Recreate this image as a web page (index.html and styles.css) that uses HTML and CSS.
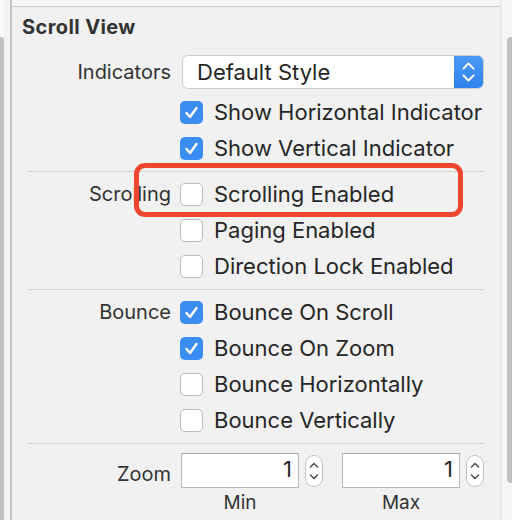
FILE: index.html
```html
<!DOCTYPE html>
<html lang="en">
<head>
    <meta charset="UTF-8">
    <meta name="viewport" content="width=device-width, initial-scale=1.0">
    <title>Scroll View Inspector</title>
    <link rel="stylesheet" href="styles.css">
</head>
<body>
    <div class="gutter gutter-left">
        <div class="thumb"></div>
    </div>

    <div class="panel">
        <h2 class="title">Scroll View</h2>

        <div class="section section-first">
            <div class="row row-popup">
                <span class="label">Indicators</span>
                <div class="popup">
                    <span class="popup-text">Default Style</span>
                    <span class="popup-arrows">
                        <svg width="29" height="34" viewBox="0 0 29 34">
                            <polyline points="9.5,13.5 14.5,8.5 19.5,13.5" fill="none" stroke="#fff" stroke-width="2" stroke-linecap="round" stroke-linejoin="round"/>
                            <polyline points="9.5,20.5 14.5,25.5 19.5,20.5" fill="none" stroke="#fff" stroke-width="2" stroke-linecap="round" stroke-linejoin="round"/>
                        </svg>
                    </span>
                </div>
            </div>
            <div class="row">
                <span class="label"></span>
                <label class="check"><span class="box on"></span>Show Horizontal Indicator</label>
            </div>
            <div class="row">
                <span class="label"></span>
                <label class="check"><span class="box on"></span>Show Vertical Indicator</label>
            </div>
        </div>

        <div class="section">
            <div class="row">
                <span class="label">Scrolling</span>
                <label class="check"><span class="box"></span>Scrolling Enabled</label>
            </div>
            <div class="row">
                <span class="label"></span>
                <label class="check"><span class="box"></span>Paging Enabled</label>
            </div>
            <div class="row">
                <span class="label"></span>
                <label class="check"><span class="box"></span>Direction Lock Enabled</label>
            </div>
        </div>

        <div class="section">
            <div class="row">
                <span class="label">Bounce</span>
                <label class="check"><span class="box on"></span>Bounce On Scroll</label>
            </div>
            <div class="row">
                <span class="label"></span>
                <label class="check"><span class="box on"></span>Bounce On Zoom</label>
            </div>
            <div class="row">
                <span class="label"></span>
                <label class="check"><span class="box"></span>Bounce Horizontally</label>
            </div>
            <div class="row">
                <span class="label"></span>
                <label class="check"><span class="box"></span>Bounce Vertically</label>
            </div>
        </div>

        <div class="section section-zoom">
            <div class="row row-zoom">
                <span class="label">Zoom</span>
                <div class="zoom-fields">
                    <div class="field-group">
                        <div class="field-line">
                            <div class="field">1</div>
                            <div class="stepper">
                                <svg width="18" height="32" viewBox="0 0 18 32">
                                    <polyline points="5,11.5 9,7.5 13,11.5" fill="none" stroke="#4a4a4a" stroke-width="1.6" stroke-linecap="round" stroke-linejoin="round"/>
                                    <polyline points="5,20.5 9,24.5 13,20.5" fill="none" stroke="#4a4a4a" stroke-width="1.6" stroke-linecap="round" stroke-linejoin="round"/>
                                </svg>
                            </div>
                        </div>
                        <span class="caption">Min</span>
                    </div>
                    <div class="field-group">
                        <div class="field-line">
                            <div class="field">1</div>
                            <div class="stepper">
                                <svg width="18" height="32" viewBox="0 0 18 32">
                                    <polyline points="5,11.5 9,7.5 13,11.5" fill="none" stroke="#4a4a4a" stroke-width="1.6" stroke-linecap="round" stroke-linejoin="round"/>
                                    <polyline points="5,20.5 9,24.5 13,20.5" fill="none" stroke="#4a4a4a" stroke-width="1.6" stroke-linecap="round" stroke-linejoin="round"/>
                                </svg>
                            </div>
                        </div>
                        <span class="caption">Max</span>
                    </div>
                </div>
            </div>
        </div>
    </div>

    <div class="gutter gutter-right">
        <div class="thumb"></div>
    </div>

    <!-- red annotation over the Scrolling row -->
    <div class="highlight"></div>
</body>
</html>
```

FILE: styles.css
```css
* {
    margin: 0;
    padding: 0;
    box-sizing: border-box;
}

body {
    font-family: 'Inter', 'Roboto', sans-serif;
    color: #262626;
    background: #f6f6f6;
    width: 512px;
    height: 520px;
    overflow: hidden;
    display: flex;
    position: relative;
}

.gutter {
    display: flex;
    padding-top: 37px;
}

.gutter-left {
    width: 12px;
    border-right: 2px solid #c4c4c4;
    background: linear-gradient(90deg, #fafafa 0, #fafafa 4px, #f3f3f3 4px);
}

.gutter-left .thumb {
    width: 4px;
    height: 100%;
    background: #c1c1c1;
    border-top-right-radius: 3px;
}

.gutter-right {
    width: 12px;
    border-left: 2px solid #ebebeb;
    justify-content: flex-end;
}

.gutter-right .thumb {
    width: 5px;
    height: 446px;
    background: #c1c1c1;
    border-top-left-radius: 4px;
    border-bottom-left-radius: 4px;
}

.panel {
    flex: 1;
    margin-top: 6px;
    border-top: 1px solid #cfcfcf;
    background: #f1f1f1;
}

.title {
    font-size: 20px;
    font-weight: 700;
    color: #333;
    padding: 8px 0 0 10px;
    height: 46px;
    letter-spacing: 0.4px;
}

.section {
    margin: 0 16px;
    padding: 4px 0 5px;
    border-bottom: 1px solid #d2d2d2;
}

.section-first {
    padding-top: 1px;
}

.section-zoom {
    border-bottom: none;
    padding-top: 9px;
}

.row {
    display: grid;
    grid-template-columns: 143px 1fr;
    column-gap: 9px;
    align-items: center;
    height: 36px;
    font-size: 22px;
}

.row-popup {
    height: 36px;
    margin-bottom: 4px;
}

.label {
    text-align: right;
    color: #333;
    font-size: 20px;
}

.check {
    display: flex;
    align-items: center;
    gap: 11px;
}

.box {
    width: 23px;
    height: 23px;
    border-radius: 5px;
    background: #fff;
    border: 1px solid #bcbcbc;
    flex-shrink: 0;
}

.box.on {
    border: none;
    background: #3a8ef3 url("data:image/svg+xml,%3Csvg xmlns='http://www.w3.org/2000/svg' width='23' height='23' viewBox='0 0 23 23'%3E%3Cpolyline points='6.5,12 10,16 16.5,7' fill='none' stroke='white' stroke-width='2.4' stroke-linecap='round' stroke-linejoin='round'/%3E%3C/svg%3E") no-repeat center;
}

.popup {
    margin-left: 2px;
    height: 34px;
    display: flex;
    align-items: center;
    background: #fff;
    border: 1px solid #cdcdcd;
    border-radius: 6px;
    overflow: hidden;
}

.popup-text {
    flex: 1;
    padding-left: 14px;
}

.popup-arrows {
    width: 29px;
    height: 34px;
    background: linear-gradient(#4a9bf7, #2f82ee);
    display: flex;
}

.row-zoom {
    height: auto;
    align-items: start;
}

.row-zoom .label {
    padding-top: 9px;
}

.zoom-fields {
    display: flex;
    gap: 19px;
    margin-left: 1px;
}

.field-group {
    display: flex;
    flex-direction: column;
}

.field-line {
    display: flex;
    align-items: center;
    gap: 6px;
}

.field {
    width: 118px;
    height: 35px;
    background: #fff;
    border: 1px solid #b9b9b9;
    border-top-color: #a9a9a9;
    text-align: right;
    padding: 2px 6px 0 0;
}

.stepper {
    width: 18px;
    height: 32px;
    background: #fff;
    border: 1px solid #c2c2c2;
    border-radius: 9px;
    display: flex;
    justify-content: center;
    align-items: center;
}

.caption {
    width: 118px;
    text-align: center;
    font-size: 19px;
    color: #333;
    line-height: 26px;
    padding-top: 2px;
}

.highlight {
    position: absolute;
    left: 134px;
    top: 163px;
    width: 329px;
    height: 54px;
    border: 5px solid #ef4630;
    border-radius: 11px;
}
```
